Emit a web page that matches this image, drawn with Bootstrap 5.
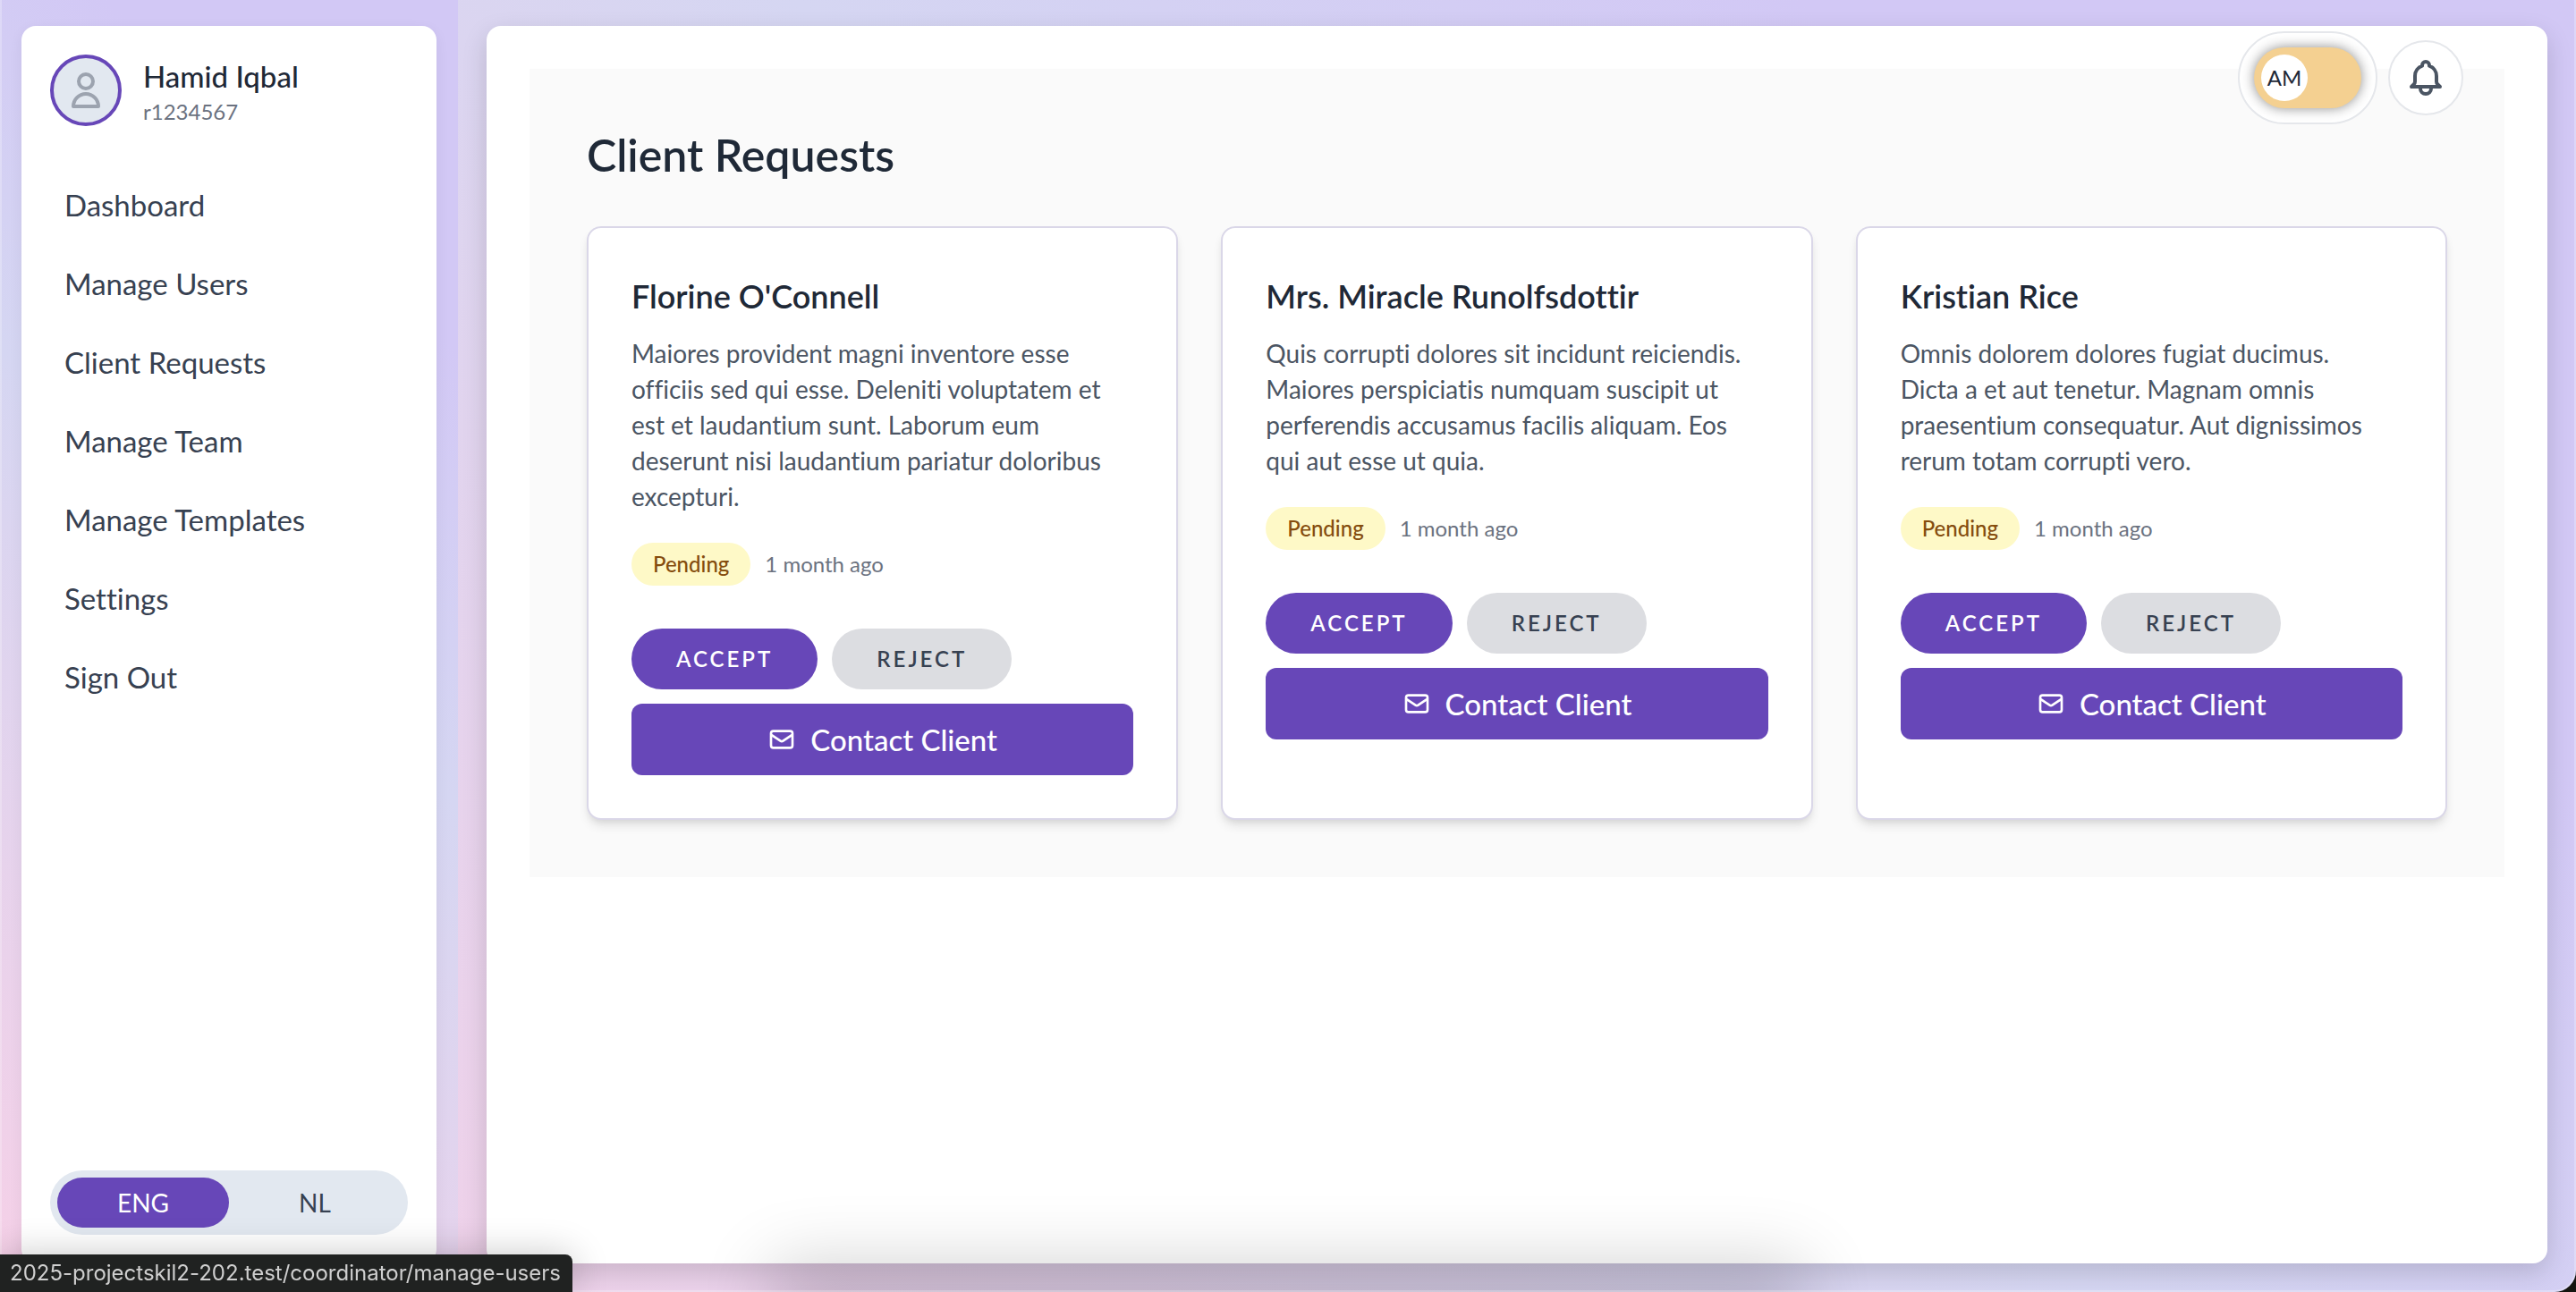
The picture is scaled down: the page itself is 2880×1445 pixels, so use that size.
<!DOCTYPE html>
<html lang="en">
<head>
<meta charset="utf-8">
<meta name="viewport" content="width=device-width, initial-scale=1">
<title>Client Requests</title>
<link href="https://cdn.jsdelivr.net/npm/bootstrap@5.3.0/dist/css/bootstrap.min.css" rel="stylesheet">
<style>
  :root { --brand: #6747b8; --ink: #1f2937; --ink-2: #374151; --ink-3: #4b5563; --ink-4: #6b7280; }
  html { background: #14150f; }
  body { font-family: Lato, "Open Sans", sans-serif; font-variant-ligatures: none; color: var(--ink); background: transparent; }
  .shell { border-radius: 0 0 24px 24px; overflow: hidden; }
  .wash { background: linear-gradient(45deg, #f6d0e7 0%, #d5d6f2 54%, #d2c8f5 80%); }
  .side-wrap { width: 512px; padding: 29px 24px 32px; }
  .main-wrap { padding: 29px 32px 32px; min-width: 0; }
  .sheet { background: #fff; border-radius: 16px; }
  .side-sheet { padding: 32px; box-shadow: 0 4px 16px rgba(0,0,0,.06); }
  .main-sheet { padding: 48px; box-shadow: 0 10px 28px rgba(0,0,0,.15); }
  .avatar { width: 80px; height: 80px; border: 4px solid var(--brand); background: #e2e8f0; color: #9ca3af; }
  .user-name { font-size: 33px; line-height: 48px; font-weight: 500; }
  .user-id { font-size: 24px; line-height: 32px; color: var(--ink-4); }
  .side-nav { margin-top: 48px; gap: 8px; }
  .side-nav .nav-link { font-size: 33px; line-height: 48px; padding: 16px; color: var(--ink-2); }
  .lang { background: #e2e8f0; border-radius: 36px; padding: 8px; }
  .lang button { border: 0; border-radius: 28px; height: 56px; font-size: 28px; background: transparent; color: var(--ink-2); }
  .lang button.active { background: var(--brand); color: #fff; }
  .panel { background: #fafafa; padding: 64px; }
  .panel h1 { font-size: 50px; line-height: 64px; font-weight: 600; margin: 0 0 48px; }
  .request-row { --bs-gutter-x: 48px; }
  .request { border: 2px solid #dad7e8; border-radius: 16px; padding: 48px; background: #fff;
    box-shadow: 0 8px 12px -2px rgba(0,0,0,.1), 0 4px 8px -4px rgba(0,0,0,.1); }
  .request h2 { font-size: 36px; line-height: 56px; font-weight: 600; margin: 0 0 16px; }
  .request p { font-size: 28px; line-height: 40px; color: var(--ink-3); margin: 0 0 32px; padding-right: 16px; }
  .state { background: #fef9c7; color: #854d0e; font-size: 24px; line-height: 32px; font-weight: 500; padding: 8px 24px; border-radius: 24px; }
  .ago { font-size: 24px; line-height: 32px; color: var(--ink-4); }
  .actions { margin-top: 48px; gap: 16px; }
  .pill { font-size: 24px; line-height: 32px; font-weight: 600; letter-spacing: 3px; padding: 18px 50px; border: 0; border-radius: 34px; }
  .pill-accept { background: var(--brand); color: #fff; }
  .pill-reject { background: #dcdde1; color: var(--ink-2); }
  .contact { background: var(--brand); color: #fff; font-size: 33px; line-height: 48px; font-weight: 500; padding: 16px; gap: 16px; border-radius: 12px; }
  .tools { position: absolute; top: 6px; right: 94px; gap: 12px; }
  .tool { background: #fff; border: 2px solid #e5e7eb; }
  .shift-tool { padding: 16px; border-radius: 78px; }
  .shift { width: 120px; height: 68px; padding: 8px; border: 0; border-radius: 34px; background: #f4d091; box-shadow: 0 0 14px rgba(0,0,0,.45); }
  .shift span { width: 52px; height: 52px; background: #fff; font-size: 24px; line-height: 52px; color: var(--ink); }
  .bell { width: 84px; height: 84px; color: var(--ink-3); padding: 0; }
  .edge { position: fixed; inset: 0; border: 2px solid rgba(255,255,255,.25); border-top: 0; border-radius: 0 0 24px 24px; pointer-events: none; }
  .dock-shade { position: fixed; left: 31%; right: 31%; bottom: -40px; height: 40px; box-shadow: 0 0 80px 30px rgba(0,0,0,.19); pointer-events: none; }
  .status { position: fixed; left: 0; bottom: 0; width: 640px; height: 42px; padding-left: 11px; background: #202221; color: #cfcfcf;
    font-family: Inter, sans-serif; font-size: 24px; line-height: 42px; border-radius: 0 8px 0 0; box-shadow: 0 0 40px rgba(0,0,0,.22); white-space: nowrap; }
  svg { fill: none; stroke: currentColor; stroke-width: 2; stroke-linecap: round; stroke-linejoin: round; flex: none; }
</style>
<script src="https://cdn.jsdelivr.net/npm/bootstrap@5.3.0/dist/js/bootstrap.bundle.min.js"></script>
</head>
<body>
<div class="shell wash d-flex min-vh-100">
  <aside class="side-wrap wash d-flex flex-shrink-0">
    <div class="sheet side-sheet d-flex flex-column flex-grow-1">
      <div class="d-flex align-items-center">
        <div class="avatar rounded-circle d-flex align-items-center justify-content-center me-4">
          <svg width="48" height="48" viewBox="0 0 24 24" aria-hidden="true"><path d="M16 7a4 4 0 11-8 0 4 4 0 018 0zM12 14a7 7 0 00-7 7h14a7 7 0 00-7-7z"/></svg>
        </div>
        <div>
          <div class="user-name">Hamid Iqbal</div>
          <div class="user-id">r1234567</div>
        </div>
      </div>
      <nav class="nav flex-column side-nav">
        <a class="nav-link" href="#">Dashboard</a>
        <a class="nav-link" href="#">Manage Users</a>
        <a class="nav-link" href="#">Client Requests</a>
        <a class="nav-link" href="#">Manage Team</a>
        <a class="nav-link" href="#">Manage Templates</a>
        <a class="nav-link" href="#">Settings</a>
        <a class="nav-link" href="#">Sign Out</a>
      </nav>
      <div class="lang d-flex mt-auto">
        <button type="button" class="active flex-fill w-50">ENG</button>
        <button type="button" class="flex-fill w-50">NL</button>
      </div>
    </div>
  </aside>
  <main class="main-wrap d-flex flex-grow-1">
    <div class="sheet main-sheet position-relative flex-grow-1">
      <section class="panel">
        <h1>Client Requests</h1>
        <div class="row row-cols-3 request-row">
          <div class="col">
            <article class="request h-100">
              <h2>Florine O'Connell</h2>
              <p>Maiores provident magni inventore esse officiis sed qui esse. Deleniti voluptatem et est et laudantium sunt. Laborum eum deserunt nisi laudantium pariatur doloribus excepturi.</p>
              <div class="d-flex align-items-center gap-3"><span class="state">Pending</span><span class="ago">1 month ago</span></div>
              <div class="actions d-flex flex-wrap">
                <button type="button" class="pill pill-accept">ACCEPT</button>
                <button type="button" class="pill pill-reject">REJECT</button>
                <a class="contact w-100 d-flex align-items-center justify-content-center text-decoration-none" href="#">
                  <svg width="32" height="32" viewBox="0 0 24 24" aria-hidden="true"><path d="M3 8l7.89 5.26a2 2 0 002.22 0L21 8M5 19h14a2 2 0 002-2V7a2 2 0 00-2-2H5a2 2 0 00-2 2v10a2 2 0 002 2z"/></svg>
                  Contact Client
                </a>
              </div>
            </article>
          </div>
          <div class="col">
            <article class="request h-100">
              <h2>Mrs. Miracle Runolfsdottir</h2>
              <p>Quis corrupti dolores sit incidunt reiciendis. Maiores perspiciatis numquam suscipit ut perferendis accusamus facilis aliquam. Eos qui aut esse ut quia.</p>
              <div class="d-flex align-items-center gap-3"><span class="state">Pending</span><span class="ago">1 month ago</span></div>
              <div class="actions d-flex flex-wrap">
                <button type="button" class="pill pill-accept">ACCEPT</button>
                <button type="button" class="pill pill-reject">REJECT</button>
                <a class="contact w-100 d-flex align-items-center justify-content-center text-decoration-none" href="#">
                  <svg width="32" height="32" viewBox="0 0 24 24" aria-hidden="true"><path d="M3 8l7.89 5.26a2 2 0 002.22 0L21 8M5 19h14a2 2 0 002-2V7a2 2 0 00-2-2H5a2 2 0 00-2 2v10a2 2 0 002 2z"/></svg>
                  Contact Client
                </a>
              </div>
            </article>
          </div>
          <div class="col">
            <article class="request h-100">
              <h2>Kristian Rice</h2>
              <p>Omnis dolorem dolores fugiat ducimus. Dicta a et aut tenetur. Magnam omnis praesentium consequatur. Aut dignissimos rerum totam corrupti vero.</p>
              <div class="d-flex align-items-center gap-3"><span class="state">Pending</span><span class="ago">1 month ago</span></div>
              <div class="actions d-flex flex-wrap">
                <button type="button" class="pill pill-accept">ACCEPT</button>
                <button type="button" class="pill pill-reject">REJECT</button>
                <a class="contact w-100 d-flex align-items-center justify-content-center text-decoration-none" href="#">
                  <svg width="32" height="32" viewBox="0 0 24 24" aria-hidden="true"><path d="M3 8l7.89 5.26a2 2 0 002.22 0L21 8M5 19h14a2 2 0 002-2V7a2 2 0 00-2-2H5a2 2 0 00-2 2v10a2 2 0 002 2z"/></svg>
                  Contact Client
                </a>
              </div>
            </article>
          </div>
        </div>
      </section>
      <div class="tools d-flex align-items-center">
        <div class="tool shift-tool">
          <button type="button" class="shift d-flex" aria-label="Morning shift"><span class="rounded-circle text-center">AM</span></button>
        </div>
        <button type="button" class="tool bell rounded-circle d-flex align-items-center justify-content-center" aria-label="Notifications">
          <svg width="48" height="48" viewBox="0 0 24 24" aria-hidden="true"><path d="M15 17h5l-1.405-1.405A2.032 2.032 0 0118 14.158V11a6.002 6.002 0 00-4-5.659V5a2 2 0 10-4 0v.341C7.67 6.165 6 8.388 6 11v3.159c0 .538-.214 1.055-.595 1.436L4 17h5m6 0v1a3 3 0 11-6 0v-1m6 0H9"/></svg>
        </button>
      </div>
    </div>
  </main>
</div>
<div class="dock-shade"></div>
<div class="edge"></div>
<div class="status">2025-projectskil2-202.test/coordinator/manage-users</div>
</body>
</html>
